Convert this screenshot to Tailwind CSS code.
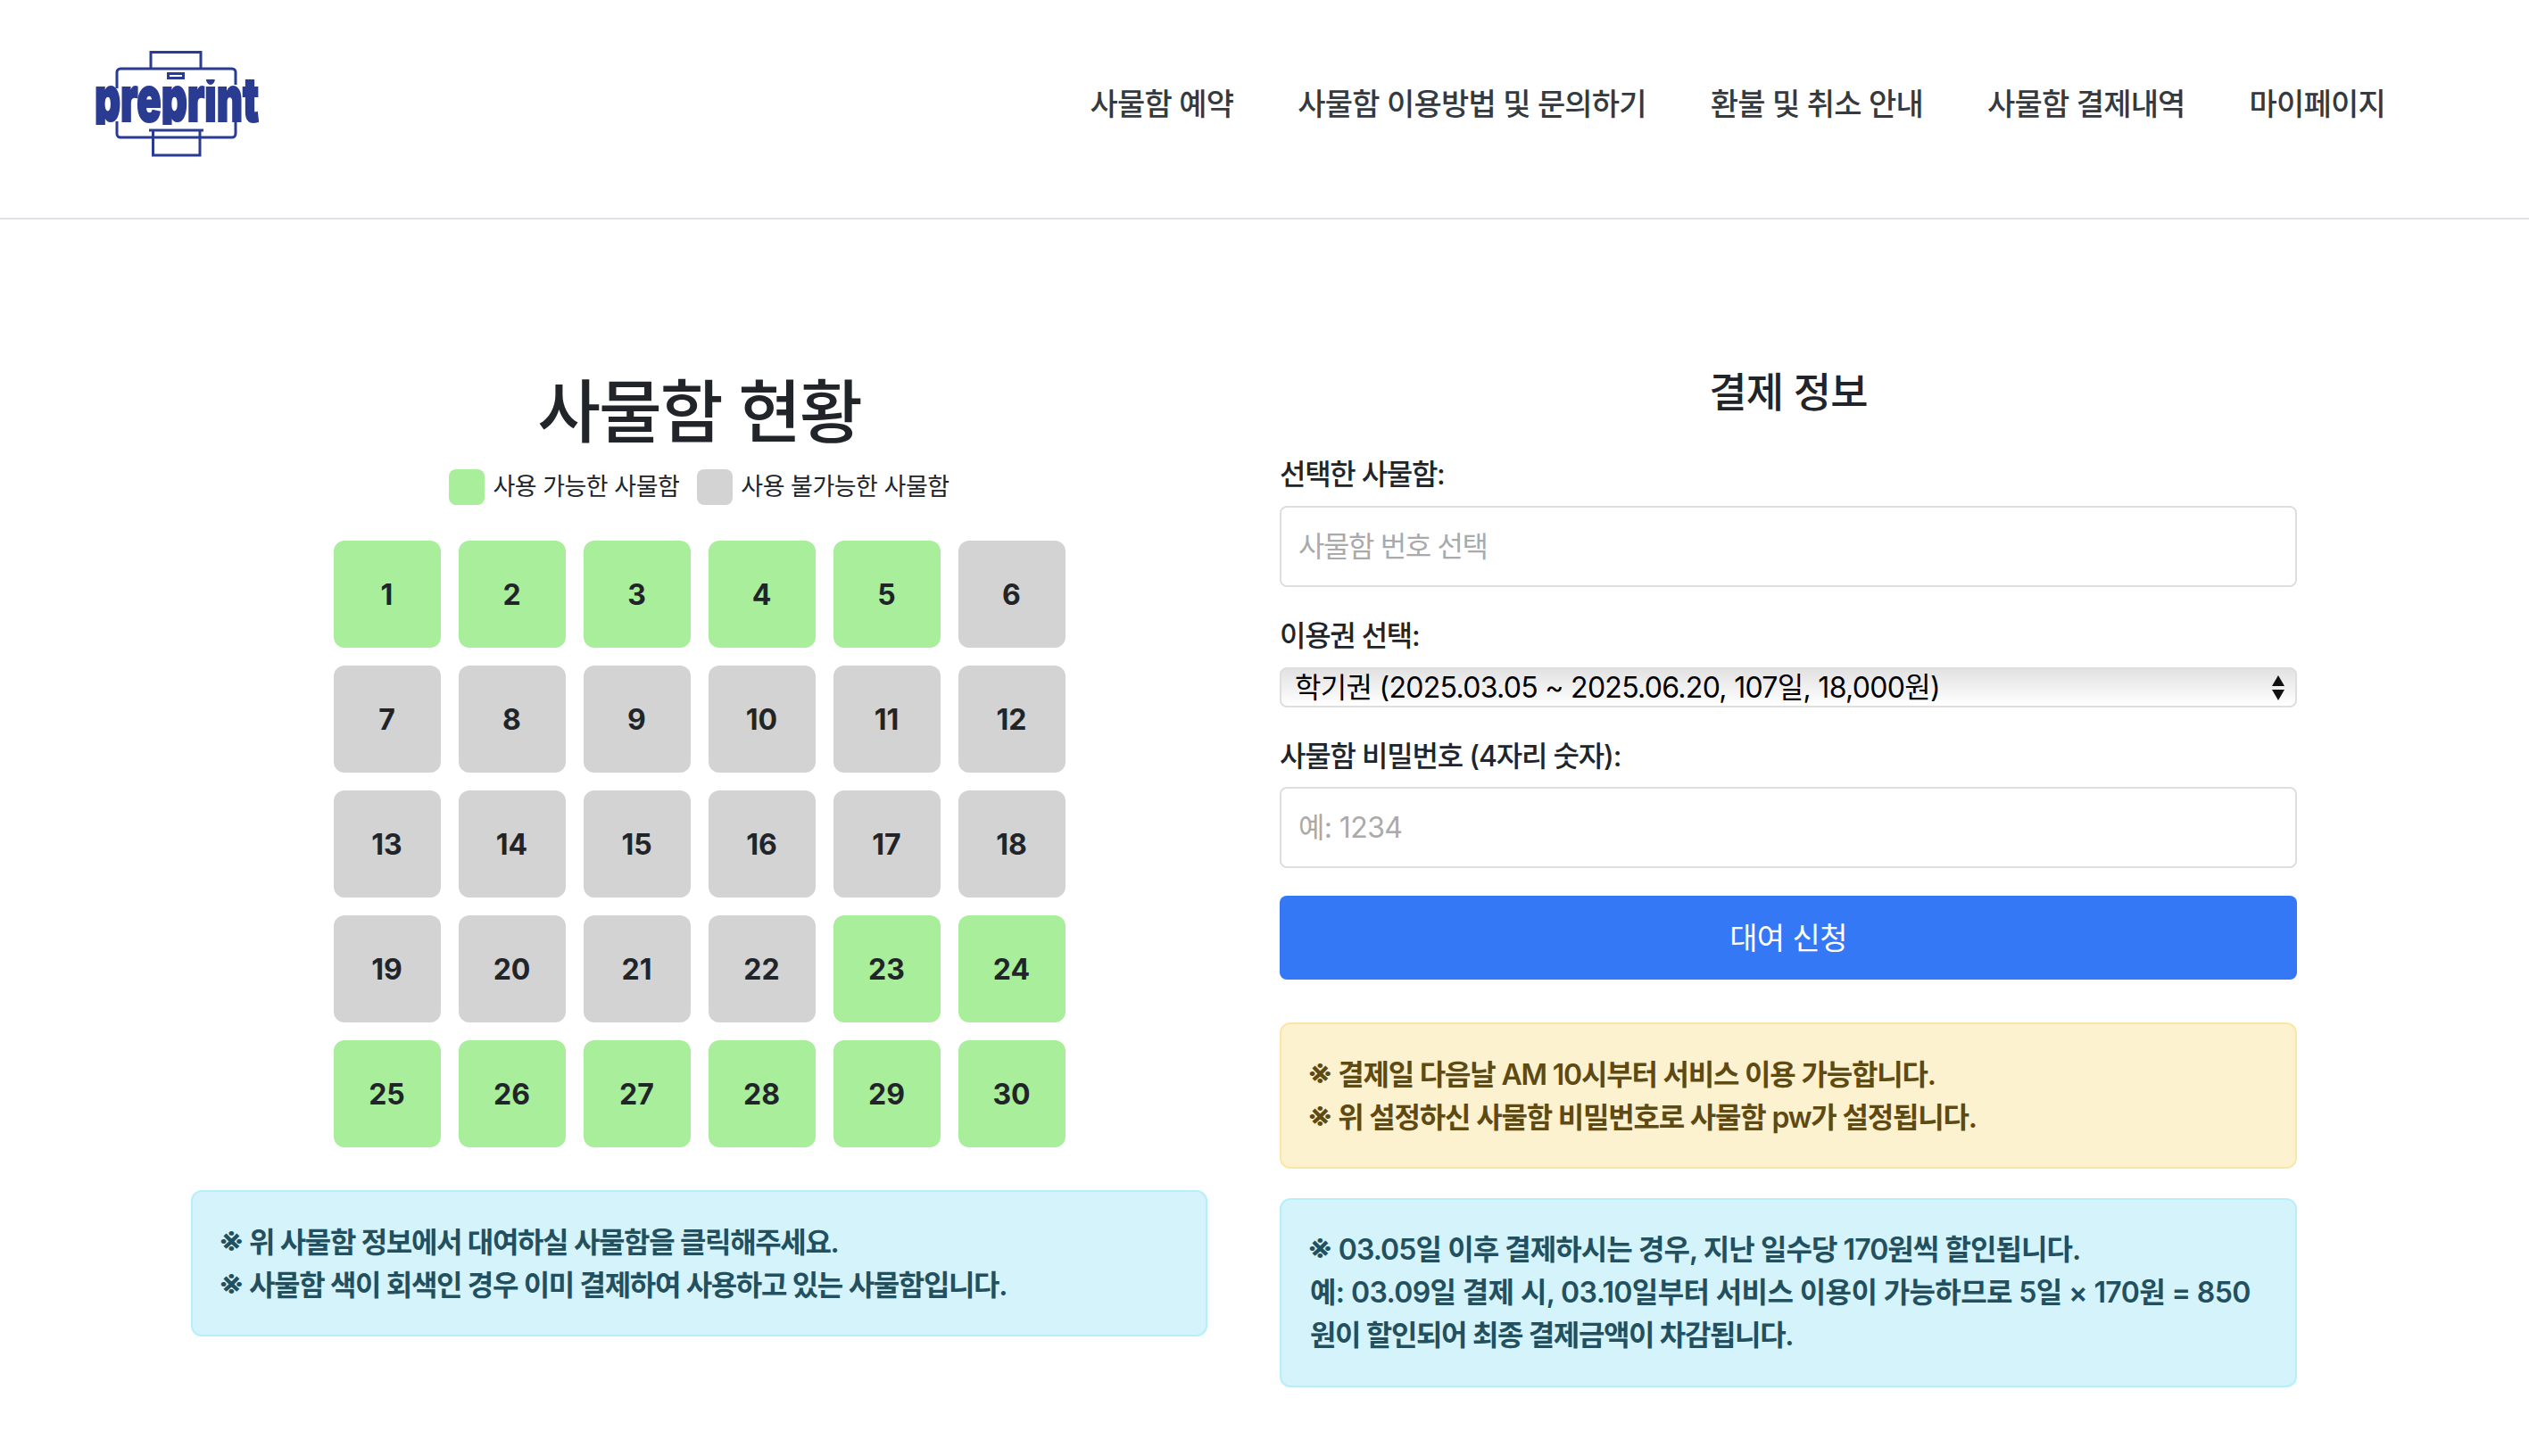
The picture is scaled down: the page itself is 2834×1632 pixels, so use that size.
<!DOCTYPE html>
<html lang="ko">
<head>
<meta charset="utf-8">
<script src="https://cdn.jsdelivr.net/npm/@tailwindcss/browser@4"></script>
<title>사물함 현황</title>
</head>
<body class="bg-white text-[#212529] font-['Inter','Noto_Sans_CJK_KR',sans-serif]">
<header class="h-[246px] border-b-2 border-[#dee2e6] flex items-center justify-between pl-[105px] pr-[161px]">
  <svg class="w-[186px] h-[118px] -mt-[12px] shrink-0 overflow-visible" viewBox="105 58 186 118" fill="none" stroke="#2a3b92" stroke-width="3">
    <defs><clipPath id="logoclip"><rect x="100" y="90" width="196" height="51"/></clipPath></defs>
    <path d="M169 77V59.500H225V77"/>
    <path d="M131 100V82a4 4 0 0 1 4-4H260a4 4 0 0 1 4 4V96M264 137V151a4 4 0 0 1-4 4H135a4 4 0 0 1-4-4V137"/>
    <rect x="188.500" y="83.500" width="17" height="5"/>
    <path d="M167 147H228M171.500 147V175H224V147"/>
    <g clip-path="url(#logoclip)"><text x="106" y="137" textLength="184" lengthAdjust="spacingAndGlyphs" font-family="Inter" font-weight="900" font-size="70" fill="#2a3b92" stroke="#2a3b92" stroke-width="2.200">preprint</text></g>
  </svg>
  <nav class="flex gap-[72px] text-[34px] font-medium tracking-[-0.8px] leading-[48px] text-[#343a40] -mt-[10px]">
    <a>사물함 예약</a><a>사물함 이용방법 및 문의하기</a><a>환불 및 취소 안내</a><a>사물함 결제내역</a><a>마이페이지</a>
  </nav>
</header>
<main class="flex gap-[81px] pl-[214px] pt-[163px]">
  <section class="w-[1139px] shrink-0">
    <h2 class="h-[117px] pt-[3px] text-center text-[77px] leading-[100px] font-medium tracking-[-2px]">사물함 현황</h2>
    <div class="flex justify-center items-center gap-[20px] h-[40px] text-[27px] tracking-[-0.5px]">
      <div class="flex items-center gap-[9px]"><span class="w-[40px] h-[40px] rounded-[8px] bg-[#a9ee9b]"></span>사용 가능한 사물함</div>
      <div class="flex items-center gap-[9px]"><span class="w-[40px] h-[40px] rounded-[8px] bg-[#d3d3d3]"></span>사용 불가능한 사물함</div>
    </div>
    <div class="grid grid-cols-[repeat(6,120px)] auto-rows-[120px] gap-[20px] justify-center mt-[40px] text-[32px] font-bold [&>div]:pt-[2px]">
      <div class="rounded-[12px] bg-[#a9ee9b] flex items-center justify-center">1</div>
      <div class="rounded-[12px] bg-[#a9ee9b] flex items-center justify-center">2</div>
      <div class="rounded-[12px] bg-[#a9ee9b] flex items-center justify-center">3</div>
      <div class="rounded-[12px] bg-[#a9ee9b] flex items-center justify-center">4</div>
      <div class="rounded-[12px] bg-[#a9ee9b] flex items-center justify-center">5</div>
      <div class="rounded-[12px] bg-[#d3d3d3] flex items-center justify-center">6</div>
      <div class="rounded-[12px] bg-[#d3d3d3] flex items-center justify-center">7</div>
      <div class="rounded-[12px] bg-[#d3d3d3] flex items-center justify-center">8</div>
      <div class="rounded-[12px] bg-[#d3d3d3] flex items-center justify-center">9</div>
      <div class="rounded-[12px] bg-[#d3d3d3] flex items-center justify-center">10</div>
      <div class="rounded-[12px] bg-[#d3d3d3] flex items-center justify-center">11</div>
      <div class="rounded-[12px] bg-[#d3d3d3] flex items-center justify-center">12</div>
      <div class="rounded-[12px] bg-[#d3d3d3] flex items-center justify-center">13</div>
      <div class="rounded-[12px] bg-[#d3d3d3] flex items-center justify-center">14</div>
      <div class="rounded-[12px] bg-[#d3d3d3] flex items-center justify-center">15</div>
      <div class="rounded-[12px] bg-[#d3d3d3] flex items-center justify-center">16</div>
      <div class="rounded-[12px] bg-[#d3d3d3] flex items-center justify-center">17</div>
      <div class="rounded-[12px] bg-[#d3d3d3] flex items-center justify-center">18</div>
      <div class="rounded-[12px] bg-[#d3d3d3] flex items-center justify-center">19</div>
      <div class="rounded-[12px] bg-[#d3d3d3] flex items-center justify-center">20</div>
      <div class="rounded-[12px] bg-[#d3d3d3] flex items-center justify-center">21</div>
      <div class="rounded-[12px] bg-[#d3d3d3] flex items-center justify-center">22</div>
      <div class="rounded-[12px] bg-[#a9ee9b] flex items-center justify-center">23</div>
      <div class="rounded-[12px] bg-[#a9ee9b] flex items-center justify-center">24</div>
      <div class="rounded-[12px] bg-[#a9ee9b] flex items-center justify-center">25</div>
      <div class="rounded-[12px] bg-[#a9ee9b] flex items-center justify-center">26</div>
      <div class="rounded-[12px] bg-[#a9ee9b] flex items-center justify-center">27</div>
      <div class="rounded-[12px] bg-[#a9ee9b] flex items-center justify-center">28</div>
      <div class="rounded-[12px] bg-[#a9ee9b] flex items-center justify-center">29</div>
      <div class="rounded-[12px] bg-[#a9ee9b] flex items-center justify-center">30</div>
    </div>
    <div class="mt-[48px] rounded-[12px] border-2 border-[#b6effb] bg-[#d5f3fb] text-[#22505f] px-[32px] pt-[33px] pb-[31px] text-[32px] leading-[48px] font-semibold tracking-[-1.35px]">
      <p><span class="text-[38px] leading-[0] -ml-[3px]">※</span> 위 사물함 정보에서 대여하실 사물함을 클릭해주세요.</p>
      <p><span class="text-[38px] leading-[0] -ml-[3px]">※</span> 사물함 색이 회색인 경우 이미 결제하여 사용하고 있는 사물함입니다.</p>
    </div>
  </section>
  <section class="w-[1140px] shrink-0">
    <h3 class="-mt-[2px] text-center text-[46px] leading-[64px] font-medium tracking-[-0.8px]">결제 정보</h3>
    <label class="block mt-[37px] text-[32px] leading-[48px] font-medium tracking-[-1.3px]">선택한 사물함:</label>
    <input class="block mt-[11px] w-full h-[91px] rounded-[8px] border-2 border-[#dedede] px-[19px] text-[32px] tracking-[-1.4px] placeholder:text-[#aaaaaa]" placeholder="사물함 번호 선택">
    <label class="block mt-[31px] text-[32px] leading-[48px] font-medium tracking-[-1.3px]">이용권 선택:</label>
    <div class="relative mt-[11px]">
      <select class="block w-full h-[45px] appearance-none rounded-[8px] border-2 border-[#dedede] bg-gradient-to-b from-[#e2e2e2] to-white px-[15px] text-[32px] leading-[40px] tracking-[-0.7px] text-black">
        <option>학기권 (2025.03.05 ~ 2025.06.20, 107일, 18,000원)</option>
      </select>
      <svg class="absolute right-[14px] top-[9px] w-[14px] h-[28px] pointer-events-none" viewBox="0 0 14 28" fill="#111"><path d="M7 0 14 12H0ZM0 16H14L7 28Z"/></svg>
    </div>
    <label class="block mt-[31px] text-[32px] leading-[48px] font-medium tracking-[-1.2px]">사물함 비밀번호 (4자리 숫자):</label>
    <input class="block mt-[10px] w-full h-[91px] rounded-[8px] border-2 border-[#dedede] px-[19px] text-[32px] tracking-[-0.6px] placeholder:text-[#aaaaaa]" placeholder="예: 1234">
    <button class="block mt-[31px] w-full h-[94px] rounded-[8px] bg-[#3578f6] text-white text-[34px] tracking-[-0.6px]">대여 신청</button>
    <div class="mt-[48px] rounded-[12px] border-2 border-[#fbe6a8] bg-[#fdf2d0] text-[#5e4a13] px-[32px] pt-[33px] pb-[31px] text-[32px] leading-[48px] font-semibold tracking-[-1.2px]">
      <p><span class="text-[38px] leading-[0] -ml-[3px]">※</span> 결제일 다음날 AM 10시부터 서비스 이용 가능합니다.</p>
      <p><span class="text-[38px] leading-[0] -ml-[3px]">※</span> 위 설정하신 사물함 비밀번호로 사물함 pw가 설정됩니다.</p>
    </div>
    <div class="mt-[33px] rounded-[12px] border-2 border-[#b6effb] bg-[#d5f3fb] text-[#22505f] px-[32px] py-[32px] text-[32px] leading-[48px] font-semibold">
      <p class="tracking-[-0.93px]"><span class="text-[38px] leading-[0] -ml-[3px]">※</span> 03.05일 이후 결제하시는 경우, 지난 일수당 170원씩 할인됩니다.</p>
      <p class="tracking-[-0.61px]">예: 03.09일 결제 시, 03.10일부터 서비스 이용이 가능하므로 5일 × 170원 = 850</p>
      <p class="tracking-[-1.36px]">원이 할인되어 최종 결제금액이 차감됩니다.</p>
    </div>
  </section>
</main>
</body>
</html>
